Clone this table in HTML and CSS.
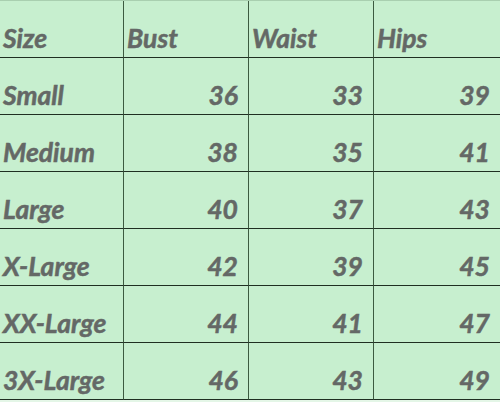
FILE: index.html
```html
<!DOCTYPE html>
<html>
<head>
<meta charset="utf-8">
<link rel="stylesheet" href="styles.css">
</head>
<body>
<div class="chart">
  <div class="cell label">Size</div><div class="cell label">Bust</div><div class="cell label">Waist</div><div class="cell label last">Hips</div>
  <div class="cell label">Small</div><div class="cell num">36</div><div class="cell num">33</div><div class="cell num last">39</div>
  <div class="cell label">Medium</div><div class="cell num">38</div><div class="cell num">35</div><div class="cell num last">41</div>
  <div class="cell label">Large</div><div class="cell num">40</div><div class="cell num">37</div><div class="cell num last">43</div>
  <div class="cell label">X-Large</div><div class="cell num">42</div><div class="cell num">39</div><div class="cell num last">45</div>
  <div class="cell label">XX-Large</div><div class="cell num">44</div><div class="cell num">41</div><div class="cell num last">47</div>
  <div class="cell label">3X-Large</div><div class="cell num">46</div><div class="cell num">43</div><div class="cell num last">49</div>
</div>
</body>
</html>
```
FILE: styles.css
```css
html, body {
  margin: 0;
  padding: 0;
  background: #e4f6e7;
}
.chart {
  display: grid;
  grid-template-columns: 124px 125px 125px 126px;
  grid-auto-rows: 57px;
  width: 500px;
  background: #c7efcf;
  border-top: 1px solid #a9cfb0;
  font-family: Lato, "Open Sans", sans-serif;
  font-weight: 700;
  font-style: italic;
  font-size: 26.5px;
  line-height: 1;
  color: #646866;
  -webkit-text-stroke: 0.5px #646866;
}
.cell {
  display: flex;
  align-items: flex-end;
  border-right: 1px solid #3c5a40;
  border-bottom: 1px solid #1f2f22;
  padding-bottom: 6px;
  box-sizing: border-box;
}
.cell.last {
  border-right: none;
}
.label {
  justify-content: flex-start;
  padding-left: 3px;
}
.num {
  justify-content: flex-end;
  padding-right: 10px;
}
```
